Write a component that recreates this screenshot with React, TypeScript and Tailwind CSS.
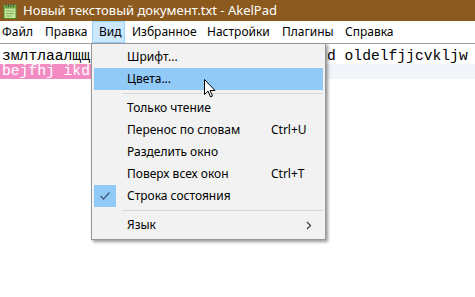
import React from "react";

const menuBar = [
  { t: "Файл", w: "w-[43px]" },
  { t: "Правка", w: "w-[54px]" },
  { t: "Вид", w: "w-[33px]", active: true },
  { t: "Избранное", w: "w-[75px]" },
  { t: "Настройки", w: "w-[75px]" },
  { t: "Плагины", w: "w-[63px]" },
  { t: "Справка", w: "w-[60px]" },
];

function Item({
  text,
  shortcut,
  hl,
  checked,
  arrow,
}: {
  text: string;
  shortcut?: string;
  hl?: boolean;
  checked?: boolean;
  arrow?: boolean;
}) {
  return (
    <div className={`relative flex items-center h-[22px] ${hl ? "bg-[#91c9f7]" : ""}`}>
      {checked && (
        <div className="absolute left-0 top-0 w-[22px] h-[22px] bg-[#91c9f7] flex items-center justify-center">
          <svg width="12" height="10" viewBox="0 0 12 10">
            <path d="M1.5 5 L4.5 8 L10.5 1.5" fill="none" stroke="#3e5d7d" strokeWidth="1.3" />
          </svg>
        </div>
      )}
      <span className="pl-[33px] flex-1">{text}</span>
      {shortcut && <span className="w-[52px]">{shortcut}</span>}
      {arrow && (
        <svg width="6" height="9" viewBox="0 0 6 9" className="mr-[11px]">
          <path d="M1 1 L4.5 4.5 L1 8" fill="none" stroke="#333" strokeWidth="1.1" />
        </svg>
      )}
    </div>
  );
}

function Sep() {
  return (
    <div className="h-[7px] flex items-center">
      <div className="ml-[28px] h-px flex-1 bg-[#d7d7d7]" />
    </div>
  );
}

export default function App() {
  const mono = "font-['Liberation_Mono','Courier_New',monospace]";
  return (
    <div className="w-[475px] h-[297px] relative overflow-hidden bg-white flex flex-col font-['Noto_Sans','Open_Sans',sans-serif] text-[12px] text-black">
      {/* Title bar */}
      <div className="h-[21px] bg-[#8c5a1e] flex items-center text-white shrink-0">
        <svg width="16" height="16" viewBox="0 0 16 16" className="ml-[2px]">
          <rect x="2" y="2" width="12" height="13.5" fill="#c8e6a0" stroke="#4f8a2b" strokeWidth="1" />
          <rect x="2.5" y="2.5" width="11" height="3" fill="#6aa83c" />
          <line x1="4" y1="1" x2="4" y2="4" stroke="#555" strokeWidth="1" />
          <line x1="6.5" y1="1" x2="6.5" y2="4" stroke="#555" strokeWidth="1" />
          <line x1="9" y1="1" x2="9" y2="4" stroke="#555" strokeWidth="1" />
          <line x1="11.5" y1="1" x2="11.5" y2="4" stroke="#555" strokeWidth="1" />
          <line x1="4" y1="8" x2="12" y2="8" stroke="#7fb055" strokeWidth="1" />
          <line x1="4" y1="10.5" x2="12" y2="10.5" stroke="#7fb055" strokeWidth="1" />
          <line x1="4" y1="13" x2="10" y2="13" stroke="#7fb055" strokeWidth="1" />
        </svg>
        <span className="ml-[5px] text-[13px] leading-none">Новый текстовый документ.txt - AkelPad</span>
      </div>

      {/* Menu bar */}
      <div className="h-[22px] flex items-stretch shrink-0 -ml-[5px]">
        {menuBar.map((m) => (
          <div
            key={m.t}
            className={`${m.w} shrink-0 flex items-center pl-[6px] ${
              m.active ? "bg-[#cce8ff] border border-[#99d1ff]" : "border border-transparent"
            }`}
          >
            {m.t}
          </div>
        ))}
      </div>

      {/* Editor */}
      <div className={`flex-1 border-t border-[#a0a0a0] pt-[5px] ${mono} text-[14.67px] leading-[15px]`}>
        <div className="h-[15px] flex whitespace-pre pl-[2px]">
          <span>змлтлаалщщ</span>
          <span className="ml-[237px]">d oldelfjjcvkljw</span>
        </div>
        <div className="h-[15px] flex bg-[#f2f6fb]">
          <span className="whitespace-pre bg-[#f48cc4] text-white pl-[2px] pr-[1px]">bejfhj ikd</span>
        </div>
      </div>

      {/* Dropdown */}
      <div className="absolute left-[91px] top-[43px] w-[235px] h-[197px] bg-[#f2f2f2] border border-[#979797] shadow-[2px_2px_3px_rgba(0,0,0,0.4)] p-[2px]">
        <Item text="Шрифт..." />
        <Item text="Цвета..." hl />
        <Sep />
        <Item text="Только чтение" />
        <Item text="Перенос по словам" shortcut="Ctrl+U" />
        <Item text="Разделить окно" />
        <Item text="Поверх всех окон" shortcut="Ctrl+T" />
        <Item text="Строка состояния" checked />
        <Sep />
        <Item text="Язык" arrow />
      </div>

      {/* Cursor */}
      <svg className="absolute left-[204px] top-[79px]" width="12" height="19" viewBox="0 0 12 19">
        <path
          d="M0.5 0.5 L0.5 15.5 L4 12 L6.5 18 L8.5 17 L6 11.5 L11 11.5 Z"
          fill="#fff"
          stroke="#000"
          strokeWidth="1"
          strokeLinejoin="miter"
        />
      </svg>
    </div>
  );
}
